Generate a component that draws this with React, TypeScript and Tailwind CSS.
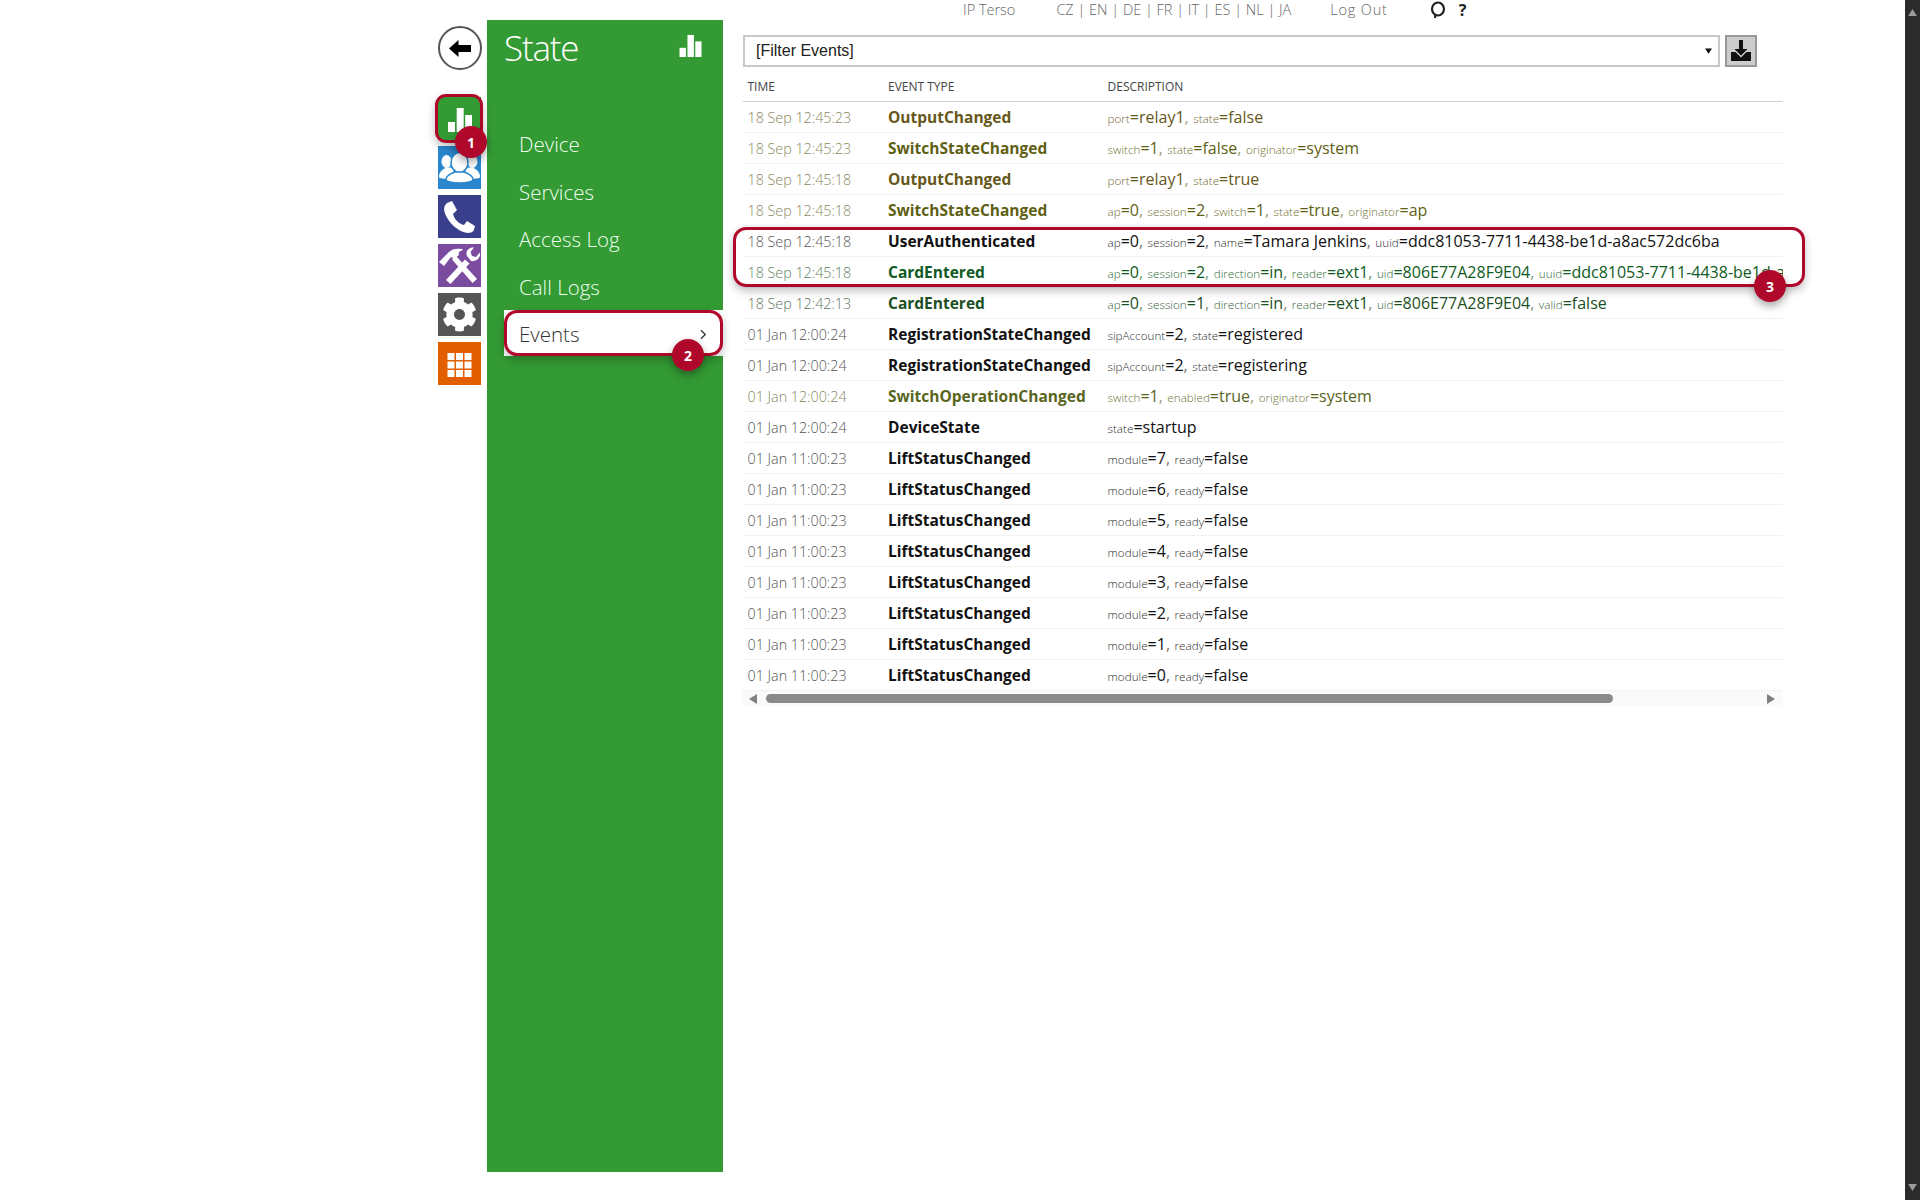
import React from "react";
import { FaCog } from "react-icons/fa";

type Row = { t: string; e: string; d: [string, string][]; ct: string; ce: string; cv: string };

const OL = { ct: "text-[#8b8560]", ce: "text-[#66571a]", cv: "text-[#66571a]" };
const OL2 = { ct: "text-[#8b8a60]", ce: "text-[#5f5f14]", cv: "text-[#5f5f14]" };
const BK = { ct: "text-[#555555]", ce: "text-[#111111]", cv: "text-[#111111]" };
const GR = { ct: "text-[#5f7f62]", ce: "text-[#0f5a22]", cv: "text-[#0f5a22]" };
const GR2 = { ct: "text-[#5f7560]", ce: "text-[#1b4f24]", cv: "text-[#1b4f24]" };

const uuid = "ddc81053-7711-4438-be1d-a8ac572dc6ba";
const lift = (n: string): Row => ({ t: "01 Jan 11:00:23", e: "LiftStatusChanged", d: [["module", n], ["ready", "false"]], ...BK });

const rows: Row[] = [
  { t: "18 Sep 12:45:23", e: "OutputChanged", d: [["port", "relay1"], ["state", "false"]], ...OL },
  { t: "18 Sep 12:45:23", e: "SwitchStateChanged", d: [["switch", "1"], ["state", "false"], ["originator", "system"]], ...OL2 },
  { t: "18 Sep 12:45:18", e: "OutputChanged", d: [["port", "relay1"], ["state", "true"]], ...OL },
  { t: "18 Sep 12:45:18", e: "SwitchStateChanged", d: [["ap", "0"], ["session", "2"], ["switch", "1"], ["state", "true"], ["originator", "ap"]], ...OL2 },
  { t: "18 Sep 12:45:18", e: "UserAuthenticated", d: [["ap", "0"], ["session", "2"], ["name", "Tamara Jenkins"], ["uuid", uuid]], ...BK },
  { t: "18 Sep 12:45:18", e: "CardEntered", d: [["ap", "0"], ["session", "2"], ["direction", "in"], ["reader", "ext1"], ["uid", "806E77A28F9E04"], ["uuid", uuid]], ...GR },
  { t: "18 Sep 12:42:13", e: "CardEntered", d: [["ap", "0"], ["session", "1"], ["direction", "in"], ["reader", "ext1"], ["uid", "806E77A28F9E04"], ["valid", "false"]], ...GR2 },
  { t: "01 Jan 12:00:24", e: "RegistrationStateChanged", d: [["sipAccount", "2"], ["state", "registered"]], ...BK },
  { t: "01 Jan 12:00:24", e: "RegistrationStateChanged", d: [["sipAccount", "2"], ["state", "registering"]], ...BK },
  { t: "01 Jan 12:00:24", e: "SwitchOperationChanged", d: [["switch", "1"], ["enabled", "true"], ["originator", "system"]], ct: "text-[#85895f]", ce: "text-[#59651c]", cv: "text-[#59651c]" },
  { t: "01 Jan 12:00:24", e: "DeviceState", d: [["state", "startup"]], ...BK },
  ...["7", "6", "5", "4", "3", "2", "1", "0"].map(lift),
];

const BarsIcon = ({ className }: { className: string }) => (
  <svg viewBox="0 0 24 24" className={className} fill="currentColor">
    <rect x="0" y="14" width="7" height="10" />
    <rect x="8.7" y="0" width="7" height="24" />
    <rect x="17.2" y="7" width="6.8" height="17" />
  </svg>
);

const BackArrow = () => (
  <svg viewBox="0 0 22 17" className="w-[22px] h-[17px]" fill="#000000">
    <path d="M0 8.500 L9.500 0 V5 H22 V12 H9.500 V17 z" />
  </svg>
);

const PeopleIcon = () => (
  <svg viewBox="0 0 43 43" className="w-[43px] h-[43px]" fill="#ffffff">
    <ellipse cx="8.500" cy="15.500" rx="5" ry="6.500" />
    <path d="M1 31c0-5 3-7 7-9.500h5l3 3-5 8c-4 .5-10 0-10-1.500z" />
    <ellipse cx="34.500" cy="15.500" rx="5" ry="6.500" />
    <path d="M42 31c0-5-3-7-7-9.500h-5l-3 3 5 8c4 .5 10 0 10-1.500z" />
    <ellipse cx="21.500" cy="16.500" rx="8.500" ry="10" stroke="#2b87cd" strokeWidth="1.500" />
    <path d="M8 33.500c0-4 5-6 9-7.500h9c4 1.500 9 3.500 9 7.500 0 2-6 3.500-13.500 3.500S8 35.500 8 33.500z" stroke="#2b87cd" strokeWidth="1.500" />
  </svg>
);

const PhoneIcon = () => (
  <svg viewBox="0 0 43 43" className="w-[43px] h-[43px]" fill="#ffffff">
    <path d="M9 8 L14 6 L19 15 L15 19 C16 24 21 29 26 30 L29 26 L37 31 L35.500 36 C33 38.500 28 38.500 24 36.500 C16 33 9 25 6.500 17 C5.500 13 6.500 10 9 8z" />
  </svg>
);

const ToolsIcon = () => (
  <svg viewBox="0 0 43 43" className="w-[43px] h-[43px]" fill="#ffffff">
    <path d="M1 18 L11 8 C14 5 18 4 24 5 L25 6 C21 7 20 9 21 11 L16 15 L13 13 L6 22z" />
    <path d="M14 15.500 L18 12 L39 35 L34.500 39z" />
    <path d="M29 12 C27 7 31 3 36 3.500 L32.500 8 L34 12 L38 13 L42 8.500 C43 14 38 18 33 17z" />
    <path d="M27 15.500 L31.500 19.500 L12.500 40 L8 36z" />
  </svg>
);

const GridIcon = () => (
  <svg viewBox="0 0 43 43" className="w-[43px] h-[43px]" fill="#ffffff">
    {[11, 19.5, 28].flatMap((y) =>
      [9.500, 18, 26.500].map((x) => <rect key={`${x}-${y}`} x={x} y={y} width="7" height="7" />)
    )}
  </svg>
);

const DownloadIcon = () => (
  <svg viewBox="0 0 24 24" className="w-[24px] h-[24px]" fill="#111111">
    <path d="M10 1h4v9h4.500l-6.500 6.500L5.500 10H10z" />
    <path d="M2 13h4.500L12 18.500 17.500 13H22v9H2z" />
  </svg>
);

const BubbleIcon = () => (
  <svg viewBox="0 0 16 18" className="w-[16px] h-[18px]" fill="none" stroke="#222222" strokeWidth="2.200">
    <ellipse cx="8" cy="8" rx="6" ry="6.500" />
    <path d="M5.500 13 L5 17" />
  </svg>
);

const Badge = ({ n, className }: { n: string; className: string }) => (
  <div className={`absolute w-[32px] h-[32px] rounded-full bg-[#b0082b] text-white font-bold text-[14px] flex items-center justify-center shadow-[0_4px_8px_rgba(0,0,0,0.35)] ${className}`}>
    {n}
  </div>
);

const Tile = ({ c, children }: { c: string; children: React.ReactNode }) => (
  <div className={`w-[43px] h-[43px] mb-[6px] flex items-center justify-center overflow-hidden ${c}`}>{children}</div>
);

const Outline = ({ className }: { className: string }) => (
  <div className={`absolute border-[3px] border-[#b0082b] shadow-[0_4px_8px_rgba(0,0,0,0.25)] ${className}`} />
);

const nav = ["Device", "Services", "Access Log", "Call Logs"];

export default function App() {
  return (
    <div className="relative w-[1920px] h-[1200px] overflow-hidden bg-white flex font-['Open_Sans','Liberation_Sans',sans-serif]">
      <div className="w-[1905px] flex pl-[438px]">
        {/* icon rail */}
        <div className="w-[43px] pt-[26px] flex flex-col">
          <div className="w-[44px] h-[44px] rounded-full border-2 border-[#555555] flex items-center justify-center mb-[27px] bg-white">
            <BackArrow />
          </div>
          <Tile c="bg-[#339a34]"><BarsIcon className="w-[24px] h-[24px] mt-[3px] text-white" /></Tile>
          <Tile c="bg-[#2b87cd]"><PeopleIcon /></Tile>
          <Tile c="bg-[#3a3f8c]"><PhoneIcon /></Tile>
          <Tile c="bg-[#7b4ba0]"><ToolsIcon /></Tile>
          <Tile c="bg-[#555555]"><FaCog className="text-white text-[35px]" /></Tile>
          <Tile c="bg-[#e25f00]"><GridIcon /></Tile>
        </div>

        {/* green sidebar */}
        <div className="ml-[6px] w-[236px] mt-[20px] h-[1152px] bg-[#339a34] text-white">
          <div className="h-[100px] pl-[17px] pr-[21px] pt-[2px] flex items-start justify-between">
            <span className="text-[35px] leading-[52px] font-light tracking-[-1.200px]">State</span>
            <BarsIcon className="w-[23px] h-[22px] mt-[13px] text-white" />
          </div>
          <div className="flex flex-col">
            {nav.map((n) => (
              <div key={n} className="h-[47.500px] pl-[32px] pt-[2px] flex items-center text-[20.500px] font-light text-[#f0fff0]">{n}</div>
            ))}
            <div className="ml-[17px] h-[46px] bg-white pl-[15px] pr-[16px] pt-[3px] flex items-center justify-between text-[20.500px] font-light text-[#333333]">
              <span>Events</span>
              <svg viewBox="0 0 8 12" className="w-[7px] h-[11px]" fill="none" stroke="#333333" strokeWidth="1.600"><path d="M1 1l5 5-5 5" /></svg>
            </div>
          </div>
        </div>

        {/* main */}
        <div className="ml-[20px] w-[1040px] flex flex-col">
          <div className="h-[35px] pb-[15px] flex items-center text-[14.500px] font-light text-[#666666]">
            <span className="ml-[220px]">IP Terso</span>
            <span className="ml-[41px]">CZ | EN | DE | FR | IT | ES | NL | JA</span>
            <span className="ml-[39px] tracking-[0.800px]">Log Out</span>
            <span className="ml-[42px]"><BubbleIcon /></span>
            <span className="ml-[13px] font-bold text-[16px] text-[#222222]">?</span>
          </div>

          <div className="flex gap-[5px] w-[1014px]">
            <div className="w-[977px] h-[32px] border-2 border-[#c8c8c8] pl-[11px] pr-[6px] flex items-center justify-between font-['Liberation_Sans',sans-serif] text-[16px] text-[#222222]">
              <span>[Filter Events]</span>
              <svg viewBox="0 0 8 6" className="w-[7px] h-[6px]" fill="#111111"><path d="M0 0h8L4 6z" /></svg>
            </div>
            <div className="w-[32px] h-[32px] border-2 border-[#999999] bg-[#cccccc] flex items-center justify-center">
              <DownloadIcon />
            </div>
          </div>

          <div className="h-[35px] pl-[4.500px] flex items-end pb-[5px] border-b border-[#cfcfcf] text-[12px] text-[#444444]">
            <span className="w-[140.500px]">TIME</span>
            <span className="w-[219.500px]">EVENT TYPE</span>
            <span>DESCRIPTION</span>
          </div>

          {rows.map((r, i) => (
            <div key={i} className="h-[31px] pl-[4.500px] flex items-center border-b border-[#f2f2f2] overflow-hidden whitespace-nowrap">
              <span className={`w-[140.500px] shrink-0 text-[14.300px] font-light pt-[1px] ${r.ct}`}>{r.t}</span>
              <span className={`w-[219.500px] shrink-0 text-[15.500px] font-bold pt-[1px] ${r.ce}`}>{r.e}</span>
              <span className={`text-[16px] ${r.cv}`}>
                {r.d.map(([k, v], j) => (
                  <React.Fragment key={k + j}>
                    <span className="text-[11.700px] font-light opacity-90">{k}</span>
                    <span>={v}</span>
                    {j < r.d.length - 1 && <span className="opacity-60 mr-[4.500px]">,</span>}
                  </React.Fragment>
                ))}
              </span>
            </div>
          ))}

          <div className="h-[14px] pt-[1px] pl-[6px] pr-[7px] bg-[#fafafa] flex items-center">
            <svg viewBox="0 0 8 10" className="w-[8px] h-[10px]" fill="#808080"><path d="M8 0v10L0 5z" /></svg>
            <div className="ml-[9px] w-[847px] h-[9px] rounded-full bg-[#8a8a8a]" />
            <div className="flex-1" />
            <svg viewBox="0 0 8 10" className="w-[8px] h-[10px] mr-[1px]" fill="#808080"><path d="M0 0v10l8-5z" /></svg>
          </div>
        </div>
      </div>

      {/* page scrollbar */}
      <div className="w-[15px] h-full bg-[#2b2b2b] flex flex-col items-center justify-between py-[9px]">
        <svg viewBox="0 0 10 8" className="w-[9px] h-[7px]" fill="#9a9a9a"><path d="M5 0l5 8H0z" /></svg>
        <svg viewBox="0 0 10 8" className="w-[9px] h-[7px]" fill="#9a9a9a"><path d="M5 8l5-8H0z" /></svg>
      </div>

      {/* annotations */}
      <Outline className="left-[435px] top-[94px] w-[48px] h-[49px] rounded-[11px]" />
      <Badge n="1" className="left-[455px] top-[126px]" />
      <Outline className="left-[504px] top-[310px] w-[219px] h-[46px] rounded-[13px]" />
      <Badge n="2" className="left-[672px] top-[339px]" />
      <Outline className="left-[733px] top-[227px] w-[1072px] h-[60px] rounded-[13px]" />
      <Badge n="3" className="left-[1754px] top-[270px]" />
    </div>
  );
}
